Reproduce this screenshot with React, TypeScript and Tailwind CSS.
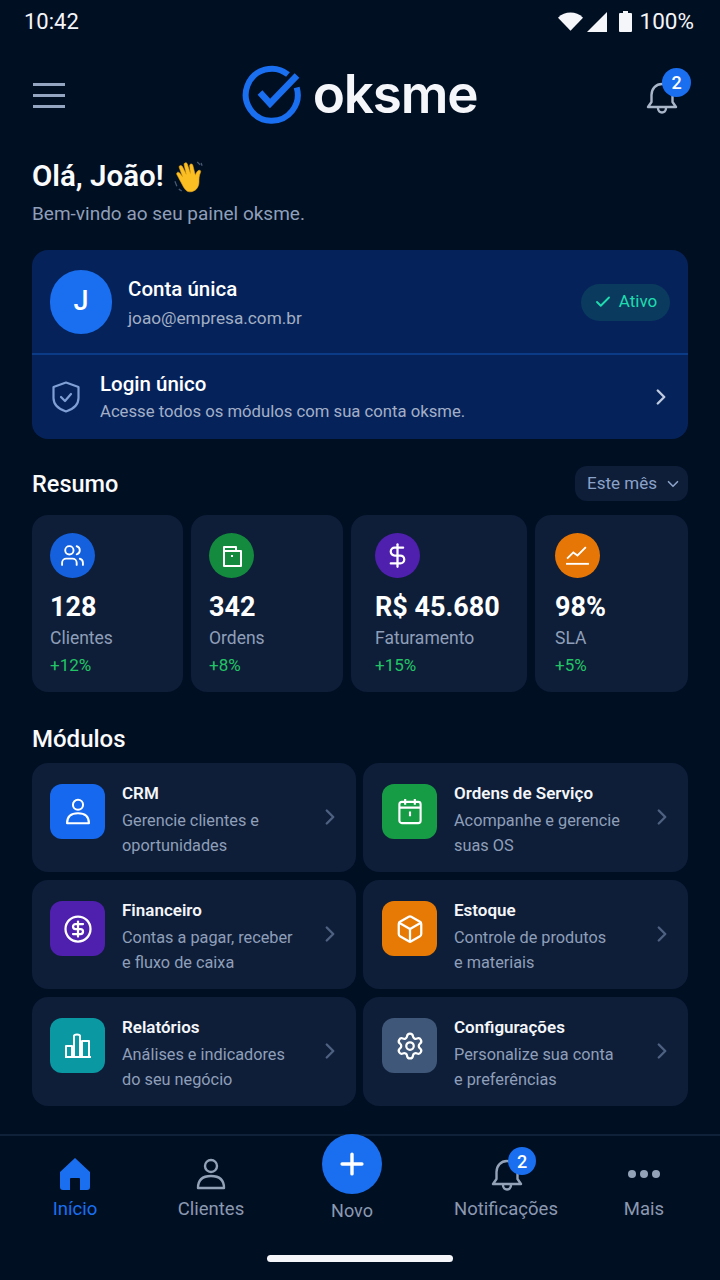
import { Check, ChevronDown, ChevronRight, DollarSign, Plus, Settings, Box, CircleDollarSign, Users } from "lucide-react";
import type { ReactNode } from "react";

const font = { fontFamily: "Roboto, 'Liberation Sans', sans-serif" };

function Bell({ className }: { className: string }) {
    return (
        <svg viewBox="0 0 32 34" fill="none" stroke="currentColor" strokeWidth="2.4" strokeLinejoin="round" strokeLinecap="round" className={className}>
            <path d="M2 26h28l-3.5-5V14C26.5 7.5 22 3 16 3S5.5 7.5 5.500 14v7z" />
            <path d="M12 27c0 6 8 6 8 0" />
        </svg>
    );
}

function Person({ className }: { className: string }) {
    return (
        <svg viewBox="0 0 30 32" fill="none" stroke="currentColor" strokeWidth="2.4" strokeLinejoin="round" className={className}>
            <circle cx="15" cy="8" r="6" />
            <path d="M2 30c0-8 5-12 13-12s13 4 13 12z" />
        </svg>
    );
}

function Logo() {
    return (
        <div className="flex items-center">
            <svg viewBox="0 0 60 60" fill="none" className="h-[60px] w-[60px] -translate-y-[1px]">
                <path d="M46 9.500A26 26 0 1 0 54.700 22.500" stroke="#1a6ff0" strokeWidth="6" />
                <path d="M18 27.500l10 11L55 10.500" stroke="#1a6ff0" strokeWidth="6.500" />
            </svg>
            <span className="ml-[11px] -translate-y-[2px] text-[53px] leading-none font-semibold tracking-[-1.2px] text-[#f4f6fa]" style={{ fontFamily: "Inter, sans-serif" }}>oksme</span>
        </div>
    );
}

function Wave() {
    return (
        <svg viewBox="0 0 34 34" className="h-[33px] w-[33px]">
            <path d="M12 28L5 15c-1-2 1.500-3.500 3-1.500l3 4L7.500 8c-.8-2.300 2-3.300 3.200-1.200l4 8L12.500 5c-.5-2.300 2.500-3 3.300-.8l3.200 9.800-.8-8c-.2-2.300 2.800-2.600 3.300-.4l2.500 10c1-2.500 2-4.500 3.800-5 1.800-.3 2 1 1.500 2.200-1.500 3.500-1.500 6.500-1.500 10 0 5-3.500 10-9.500 10-3 0-4.500-2-6.300-4.800z" fill="#fbbf24" stroke="#e8a317" strokeWidth=".6" />
            <path d="M3 22l2 5M7 30l3 2M26 2l3 3M30 3l1 3" stroke="#4a5a70" strokeWidth="1.300" fill="none" />
        </svg>
    );
}

const stats = [
    {
        value: "128", label: "Clientes", delta: "+12%", box: "w-[151px] pl-[18px]", bg: "bg-[#1560dc]",
        icon: <Users className="h-[25px] w-[25px]" strokeWidth={1.8} />,
    },
    {
        value: "342", label: "Ordens", delta: "+8%", box: "w-[152px] pl-[18px]", bg: "bg-[#138a3e]",
        icon: (
            <svg viewBox="0 0 24 24" fill="none" stroke="currentColor" strokeWidth="2" strokeLinejoin="round" className="h-[24px] w-[24px]">
                <path d="M4 3h12v4h5v15H4zM4 7h12" />
                <path d="M12 11v2" />
            </svg>
        ),
    },
    {
        value: "R$ 45.680", label: "Faturamento", delta: "+15%", box: "w-[176px] pl-[24px]", bg: "bg-[#4f1fae]",
        icon: <DollarSign className="h-[27px] w-[27px]" strokeWidth={2} />,
    },
    {
        value: "98%", label: "SLA", delta: "+5%", box: "w-[153px] pl-[20px]", bg: "bg-[#e67605]",
        icon: (
            <svg viewBox="0 0 24 24" fill="none" stroke="currentColor" strokeWidth="1.800" className="h-[25px] w-[25px]">
                <path d="M2 15l6-6 4 3 8-8" />
                <path d="M1 20h22" />
            </svg>
        ),
    },
];

const modules: { title: string; lines: [string, string]; bg: string; pad: string; icon: ReactNode }[] = [
    {
        title: "CRM", lines: ["Gerencie clientes e", "oportunidades"], bg: "bg-[#1668ee]", pad: "pl-[18px]",
        icon: <Person className="h-[27px] w-[26px]" />,
    },
    {
        title: "Ordens de Serviço", lines: ["Acompanhe e gerencie", "suas OS"], bg: "bg-[#169c44]", pad: "pl-[19px]",
        icon: (
            <svg viewBox="0 0 26 28" fill="none" stroke="currentColor" strokeWidth="2.200" strokeLinejoin="round" className="h-[27px] w-[26px]">
                <rect x="2" y="4" width="22" height="22" rx="2.500" />
                <path d="M2 10h22M8 1v6M18 1v6M13 14v5" />
            </svg>
        ),
    },
    {
        title: "Financeiro", lines: ["Contas a pagar, receber", "e fluxo de caixa"], bg: "bg-[#4f1fae]", pad: "pl-[18px]",
        icon: <CircleDollarSign className="h-[30px] w-[30px]" strokeWidth={1.8} />,
    },
    {
        title: "Estoque", lines: ["Controle de produtos", "e materiais"], bg: "bg-[#e67a05]", pad: "pl-[19px]",
        icon: <Box className="h-[30px] w-[30px]" strokeWidth={1.8} />,
    },
    {
        title: "Relatórios", lines: ["Análises e indicadores", "do seu negócio"], bg: "bg-[#0a98a3]", pad: "pl-[18px]",
        icon: (
            <svg viewBox="0 0 26 26" fill="none" stroke="currentColor" strokeWidth="2" strokeLinejoin="round" className="h-[26px] w-[26px]">
                <path d="M1 24V13h6v11M9 24V3c0-2 6-2 6 0v21M17 24V8h7v16M0 24h26" />
            </svg>
        ),
    },
    {
        title: "Configurações", lines: ["Personalize sua conta", "e preferências"], bg: "bg-[#3f5778]", pad: "pl-[19px]",
        icon: <Settings className="h-[30px] w-[30px]" strokeWidth={1.8} />,
    },
];

export default function App() {
    return (
        <div className="flex h-[1280px] w-[720px] flex-col overflow-hidden bg-[#010f23] text-white" style={font}>
            {/* status bar */}
            <div className="flex h-[43px] items-center justify-between pr-[26px] pl-[24px] text-[22px] text-[#f4f6fa]">
                <span>10:42</span>
                <div className="flex items-center">
                    <svg viewBox="0 0 26 19" className="h-[19px] w-[25px] fill-current"><path d="M0 5.500C7-1.500 19-1.500 26 5.500L13 19z" /></svg>
                    <svg viewBox="0 0 20 20" className="ml-[4px] h-[20px] w-[20px] fill-current"><path d="M20 0v20H0z" /></svg>
                    <svg viewBox="0 0 13 21" className="ml-[12px] h-[21px] w-[13px] fill-current"><path d="M4 0h5v2h3q1 0 1 1v17q0 1-1 1H1q-1 0-1-1V3q0-1 1-1h3z" /></svg>
                    <span className="ml-[8px] text-[22.500px]">100%</span>
                </div>
            </div>

            {/* header */}
            <div className="mt-[23px] flex h-[60px] items-center justify-between pr-[42px] pl-[33px]">
                <div className="flex w-[32px] -translate-y-[1px] flex-col gap-[8px]">
                    <div className="h-[3px] bg-[#93a5c0]" />
                    <div className="h-[3px] bg-[#93a5c0]" />
                    <div className="h-[3px] bg-[#93a5c0]" />
                </div>
                <div className="ml-[8px]"><Logo /></div>
                <div className="relative h-[34px] w-[32px] translate-y-[2px] text-[#a9b5c8]">
                    <Bell className="h-[34px] w-[32px]" />
                    <span className="absolute -top-[13px] left-[16px] flex h-[29px] w-[29px] items-center justify-center rounded-full bg-[#1a6ff0] text-[18px] font-medium text-white">2</span>
                </div>
            </div>

            <main className="flex flex-col px-[32px]">
                <div className="mt-[30px] flex h-[40px] items-center gap-[8px]">
                    <h1 className="text-[29.500px] font-semibold text-[#fafbfd]">Olá, João!</h1>
                    <Wave />
                </div>
                <p className="mt-[6px] text-[19px] leading-[24px] text-[#8f9fb9]">Bem-vindo ao seu painel oksme.</p>

                {/* account card */}
                <section className="mt-[24px] h-[189px] rounded-[16px] bg-[#05235a]">
                    <div className="flex h-[105px] items-center border-b-2 border-[#0b3a86] pr-[18px] pl-[18px]">
                        <div className="flex h-[64px] w-[62px] items-center justify-center rounded-full bg-[#1a6ff0] text-[27px] font-medium">J</div>
                        <div className="ml-[16px] flex-1 pt-[3px]">
                            <div className="text-[20.500px] leading-[26px] font-medium">Conta única</div>
                            <div className="mt-[4px] text-[17.200px] leading-[24px] text-[#a3afc4]">joao@empresa.com.br</div>
                        </div>
                        <div className="mt-[1px] flex h-[37px] w-[89px] items-center justify-center gap-[7px] rounded-full bg-[#0a3a5e] text-[17px] text-[#1fdcae]">
                            <Check className="h-[18px] w-[18px]" strokeWidth={2.5} />
                            <span>Ativo</span>
                        </div>
                    </div>
                    <div className="flex h-[84px] items-center pr-[14px] pl-[20px]">
                        <svg viewBox="0 0 28 32" fill="none" stroke="#7f9fd6" strokeWidth="2.200" strokeLinejoin="round" className="h-[32px] w-[28px]">
                            <path d="M14 1.500L26.500 6v11c0 6-5 11-12.500 13.500C6.500 28 1.500 23 1.500 17V6z" />
                            <path d="M9 16l4 4 6-7" strokeLinecap="round" />
                        </svg>
                        <div className="ml-[20px] flex-1">
                            <div className="text-[20.500px] leading-[26px] font-medium">Login único</div>
                            <div className="mt-[3px] text-[16.700px] leading-[24px] text-[#a3afc8]">Acesse todos os módulos com sua conta oksme.</div>
                        </div>
                        <ChevronRight className="h-[26px] w-[26px] text-[#c0cbe0]" strokeWidth={2.2} />
                    </div>
                </section>

                {/* summary */}
                <div className="mt-[27px] flex h-[35px] items-center justify-between">
                    <h2 className="pt-[2px] text-[23.500px] font-medium text-[#fafbfd]">Resumo</h2>
                    <div className="flex h-[35px] w-[113px] items-center gap-[7px] rounded-[12px] bg-[#0e1e38] pl-[12px] text-[17px] text-[#8ba2c8]">
                        <span>Este mês</span>
                        <ChevronDown className="h-[18px] w-[18px]" strokeWidth={2.2} />
                    </div>
                </div>
                <div className="mt-[14px] flex gap-[8px]">
                    {stats.map((s) => (
                        <div key={s.label} className={`h-[177px] ${s.box} rounded-[16px] bg-[#0e1e38] pt-[18px]`}>
                            <div className={`flex h-[45px] w-[45px] items-center justify-center rounded-full ${s.bg}`}>{s.icon}</div>
                            <div className="mt-[12px] text-[27px] leading-[34px] font-bold whitespace-nowrap">{s.value}</div>
                            <div className="mt-[2px] text-[17.500px] leading-[24px] text-[#8f9fb9]">{s.label}</div>
                            <div className="mt-[3px] text-[17px] leading-[24px] text-[#22c565]">{s.delta}</div>
                        </div>
                    ))}
                </div>

                {/* modules */}
                <h2 className="mt-[29px] text-[24px] leading-[36px] font-medium text-[#fafbfd]">Módulos</h2>
                <div className="mt-[6px] grid grid-cols-[324px_325px] gap-x-[7px] gap-y-[8px]">
                    {modules.map((m) => (
                        <div key={m.title} className={`flex h-[109px] rounded-[16px] bg-[#0e1e38] pt-[21px] ${m.pad}`}>
                            <div className={`flex h-[55px] w-[55px] shrink-0 items-center justify-center rounded-[12px] ${m.bg}`}>{m.icon}</div>
                            <div className="ml-[17px] w-[198px] -translate-y-[3px]">
                                <div className="text-[17px] leading-[24px] font-semibold text-[#f4f6fa]">{m.title}</div>
                                <div className="mt-[3px] text-[16.300px] leading-[25px] whitespace-nowrap text-[#8f9fb9]">
                                    {m.lines[0]}<br />{m.lines[1]}
                                </div>
                            </div>
                            <ChevronRight className="mt-[20px] ml-[-3px] h-[26px] w-[26px] text-[#4e6180]" strokeWidth={2.2} />
                        </div>
                    ))}
                </div>
            </main>

            {/* bottom nav */}
            <nav className="relative mt-[28px] grid h-[146px] shrink-0 grid-cols-[150px_122px_160px_148px_128px] border-t-2 border-[#0f2138] pr-[12px] text-[18.500px] text-[#8b99b1]">
                <div className="flex flex-col items-center pt-[22px] text-[#1a6ff0]">
                    <svg viewBox="0 0 30 32" className="h-[32px] w-[30px] fill-current">
                        <path d="M15 0L30 14v15q0 3-3 3h-7V21q0-1-1-1h-8q-1 0-1 1v11H3q-3 0-3-3V14z" />
                    </svg>
                    <span className="mt-[7px] leading-[24px]">Início</span>
                </div>
                <div className="flex flex-col items-center pt-[22px]">
                    <Person className="h-[32px] w-[30px] text-[#94a2b8]" />
                    <span className="mt-[7px] leading-[24px]">Clientes</span>
                </div>
                <div className="flex flex-col items-center">
                    <div className="-mt-[2px] flex h-[60px] w-[60px] items-center justify-center rounded-full bg-[#1a6ff0] text-white">
                        <Plus className="h-[34px] w-[34px]" strokeWidth={2.4} />
                    </div>
                    <span className="mt-[5px] text-[18px] leading-[24px]">Novo</span>
                </div>
                <div className="flex flex-col items-center pt-[22px]">
                    <div className="relative h-[32px] w-[30px] text-[#94a2b8]">
                        <Bell className="h-[34px] w-[32px]" />
                        <span className="absolute -top-[11px] left-[17px] flex h-[28px] w-[28px] items-center justify-center rounded-full bg-[#1a6ff0] text-[18px] font-medium text-white">2</span>
                    </div>
                    <span className="mt-[7px] leading-[24px]">Notificações</span>
                </div>
                <div className="flex flex-col items-center pt-[22px]">
                    <div className="flex h-[32px] items-center gap-[4px]">
                        <span className="h-[8px] w-[8px] rounded-full bg-[#94a2b8]" />
                        <span className="h-[8px] w-[8px] rounded-full bg-[#94a2b8]" />
                        <span className="h-[8px] w-[8px] rounded-full bg-[#94a2b8]" />
                    </div>
                    <span className="mt-[7px] leading-[24px]">Mais</span>
                </div>
                <div className="absolute bottom-[18px] left-[267px] h-[7px] w-[186px] rounded-full bg-[#f4f6fa]" />
            </nav>
        </div>
    );
}
